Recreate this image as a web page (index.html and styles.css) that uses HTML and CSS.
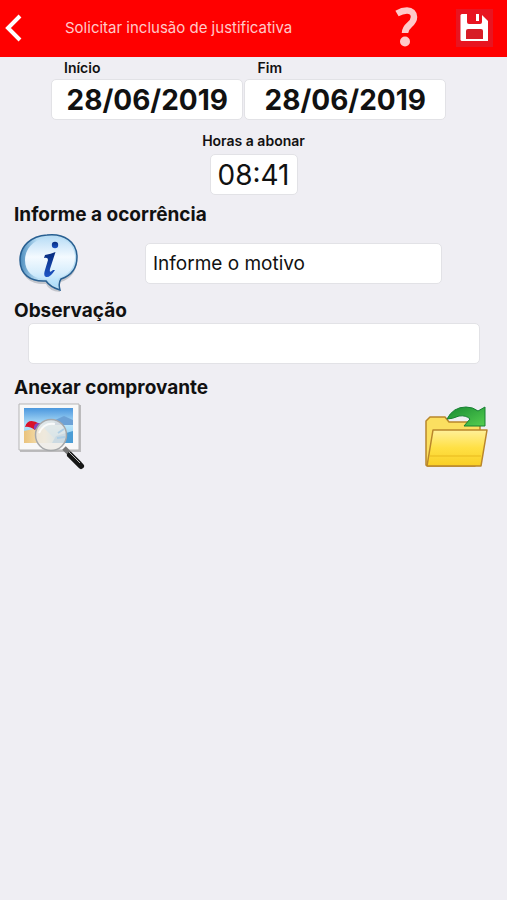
FILE: index.html
```html
<!DOCTYPE html>
<html lang="pt-BR">
<head>
<meta charset="utf-8">
<meta name="viewport" content="width=device-width, initial-scale=1">
<title>Solicitar inclusão de justificativa</title>
<link rel="stylesheet" href="styles.css">
</head>
<body>
<header class="topbar">
  <button class="icon-button back" type="button" aria-label="Voltar">
    <svg width="18" height="30" viewBox="0 0 18 30"><path d="M16 3 L4 15 L16 27" fill="none" stroke="#fff" stroke-width="4"/></svg>
  </button>
  <h1 class="title">Solicitar inclusão de justificativa</h1>
  <button class="icon-button help" type="button" aria-label="Ajuda">
    <svg width="26" height="42" viewBox="0 0 26 42"><path d="M3 6.500 C7 4.200 10 3.500 13 3.500 C17.500 3.500 20 6 20 10 C20 18 11 17.500 11 26" fill="none" stroke="#ffc9c9" stroke-width="6.500"/><circle cx="11" cy="34.500" r="5" fill="#ffc9c9"/></svg>
  </button>
  <button class="icon-button save" type="button" aria-label="Salvar">
    <svg width="37" height="38" viewBox="0 0 37 38"><path d="M0 0H37V38H0Z" fill="#e81420"/><path d="M6 5H25L32 12V32H6Q4.500 32 4.500 30.500V6.500Q4.500 5 6 5Z" fill="#fff"/><path d="M11 4H26V13Q26 15 24 15H13Q11 15 11 13Z" fill="#e81420"/><path d="M20 5H23V12H20Z" fill="#fff"/><path d="M10 30V22Q10 20 12 20H25Q27 20 27 22V30Z" fill="#d71c26"/></svg>
  </button>
</header>
<main>
  <form class="form">
    <div class="dates">
      <div class="field start">
        <label for="inicio">Início</label>
        <input class="box date" id="inicio" type="text" value="28/06/2019">
      </div>
      <div class="field end">
        <label for="fim">Fim</label>
        <input class="box date" id="fim" type="text" value="28/06/2019">
      </div>
    </div>
    <div class="hours">
      <label for="horas">Horas a abonar</label>
      <input class="box time" id="horas" type="text" value="08:41">
    </div>
    <label class="heading" for="motivo">Informe a ocorrência</label>
    <div class="reason">
      <svg width="62" height="60" viewBox="0 0 62 60" aria-hidden="true">
        <defs>
          <linearGradient id="bubble" x1="0" y1="0" x2="0" y2="1"><stop offset="0" stop-color="#b9ddf6"/><stop offset=".4" stop-color="#f4faff"/><stop offset=".7" stop-color="#d8eefc"/><stop offset="1" stop-color="#a9dcfa"/></linearGradient>
          <linearGradient id="rim" x1="0" y1="0" x2="1" y2="0"><stop offset="0" stop-color="#4d8dbe"/><stop offset=".3" stop-color="#b9ddf3"/></linearGradient>
          <linearGradient id="ink" x1="0" y1="0" x2="0" y2="1"><stop offset="0" stop-color="#062a7c"/><stop offset="1" stop-color="#1d55c6"/></linearGradient>
        </defs>
        <path d="M30 3 C46 1 59 10 59 25 C59 37 52 44 43 47 Q40 50 42 57 Q31 56 28 49 C13 50 3 42 3 28 C3 14 14 4 30 3Z" fill="#8f949e" opacity=".45" transform="translate(0 2)"/>
        <path d="M29 2 C46 0 59 9 59 24 C59 36 52 43 43 46 Q40 50 42 57 Q32 54 28 48 C12 49 2 41 2 27 C2 13 13 3 29 2Z" fill="url(#rim)" stroke="#285f91" stroke-width="1.500"/>
        <path d="M32 4 C47 3 57 12 57 24 C57 35 50 42 41 45 Q38 49 40 54 Q33 51 29 46 C15 46 7 39 7 27 C7 15 17 5 32 4Z" fill="url(#bubble)"/>
        <circle cx="37" cy="12" r="3.200" fill="url(#ink)"/>
        <path d="M27 22 Q33 21 37.500 19 L32 36 Q31 41 35 37 L37 37 Q32 45 28 44 Q25 43 27 37 L30 27 Q30 24 26 25Z" fill="url(#ink)"/>
      </svg>
      <select class="box motive" id="motivo"><option>Informe o motivo</option></select>
    </div>
    <label class="heading" for="obs">Observação</label>
    <input class="box note" id="obs" type="text">
    <h2 class="heading">Anexar comprovante</h2>
    <div class="attach">
      <button class="icon-button" type="button" aria-label="Ver comprovante">
        <svg width="70" height="70" viewBox="0 0 70 70">
          <defs>
            <linearGradient id="sky" x1="0" y1="0" x2="0" y2="1"><stop offset="0" stop-color="#4a97de"/><stop offset=".5" stop-color="#b8e4fa"/><stop offset="1" stop-color="#79c4ef"/></linearGradient>
            <linearGradient id="sand" x1="0" y1="0" x2="1" y2="0"><stop offset="0" stop-color="#eac37c"/><stop offset=".6" stop-color="#f8e7bd"/><stop offset="1" stop-color="#8fcdf1"/></linearGradient>
          </defs>
          <path d="M2 2H63V49H2Z" fill="#999" opacity=".6"/>
          <path d="M1 1H61V47H1Z" fill="#f8f8f8" stroke="#b5b5b5"/>
          <path d="M6 5H55V40H6Z" fill="url(#sky)"/>
          <path d="M37 17L46 13L55 17V22H36Z" fill="#6da2d6"/>
          <path d="M6 28L25 24L41 40H6Z" fill="url(#sand)"/>
          <path d="M38 33L55 28V40H34Z" fill="#4b9dd5"/>
          <path d="M7 24Q10 14 22 21L17 27Q11 23 7 24Z" fill="#d91229"/>
          <path d="M22 20Q15 19 16 27L21 24Z" fill="#8448bd"/>
          <path d="M46 45L62 61" stroke="#777" stroke-width="5"/>
          <path d="M52 52L63 63" stroke="#161616" stroke-width="6" stroke-linecap="round"/>
          <path d="M51 49L62 60" stroke="#bbb" stroke-width="1"/>
          <circle cx="33" cy="32" r="15.500" fill="#eceae5" fill-opacity=".8" stroke="#a6a8aa" stroke-width="1.500"/>
          <path d="M21 30Q26 19 37 21" fill="none" stroke="#fff" stroke-width="2" opacity=".8"/>
          <path d="M40 30L46 26M39 35L47 34" stroke="#b0cfe5" stroke-width="2"/>
        </svg>
      </button>
      <button class="icon-button" type="button" aria-label="Abrir arquivo">
        <svg width="64" height="64" viewBox="0 0 64 64">
          <defs>
            <linearGradient id="folder" x1="0" y1="0" x2="0" y2="1"><stop offset="0" stop-color="#fff09a"/><stop offset=".5" stop-color="#ffe044"/><stop offset="1" stop-color="#f9cf25"/></linearGradient>
            <linearGradient id="arrow" x1="0" y1="0" x2="1" y2="1"><stop offset="0" stop-color="#188a32"/><stop offset="1" stop-color="#55cf50"/></linearGradient>
          </defs>
          <path d="M1 59V15L5 11H20L24 16H55V26L50 60H3Z" fill="#fbdf60" stroke="#b9862b" stroke-width="1.500" stroke-linejoin="round"/>
          <path d="M8 24H62L56 60H2Z" fill="url(#folder)" stroke="#b9862b" stroke-width="1.500" stroke-linejoin="round"/>
          <path d="M5 50H56" stroke="#e8b91f"/>
          <path d="M22 13Q28 1 41 1Q48 1 53 5L60 1V20H39L45 13Q41 9 34 10Q27 13 22 13Z" fill="url(#arrow)" stroke="#168032" stroke-linejoin="round"/>
        </svg>
      </button>
    </div>
  </form>
</main>
</body>
</html>
```
FILE: styles.css
```css
* {
  box-sizing: border-box;
}

body {
  margin: 0;
  min-height: 100vh;
  background: #efeef3;
  color: #111;
  font-family: Inter, "Liberation Sans", sans-serif;
}

.topbar {
  display: flex;
  align-items: center;
  height: 57px;
  padding: 0 14px 2px 4px;
  background: #f00;
}

.icon-button {
  display: block;
  padding: 0;
  border: 0;
  background: none;
}

.icon-button svg,
.reason svg {
  display: block;
}

.title {
  flex: 1;
  margin: 0 0 0 43px;
  color: #ffc9c9;
  font-size: 15px;
  font-weight: 400;
}

.save {
  margin-left: 36px;
}

.form {
  display: flex;
  flex-direction: column;
}

.dates {
  display: flex;
  gap: 1px;
  padding: 3px 61px 0 51px;
}

.field {
  display: flex;
  flex-direction: column;
  min-width: 0;
}

.start {
  flex: 192;
}

.end {
  flex: 201;
}

.field label,
.hours label {
  font-size: 14px;
  font-weight: 600;
  line-height: 16px;
}

.field label {
  padding-left: 13px;
  margin-bottom: 3px;
}

.box {
  height: 41px;
  padding: 0 7px;
  border: 1px solid #e2e2e6;
  border-radius: 5px;
  background: #fff;
  color: #111;
  font-family: inherit;
  font-size: 19px;
}

.date {
  width: 100%;
  font-size: 28px;
  font-weight: 700;
  text-align: center;
}

.hours {
  display: flex;
  flex-direction: column;
  align-items: center;
  gap: 5px;
  margin-top: 13px;
}

.time {
  width: 88px;
  font-size: 28px;
  text-align: center;
}

.heading {
  margin: 0 0 0 14px;
  font-size: 19px;
  font-weight: 700;
  line-height: 24px;
}

.hours + .heading {
  margin-top: 8px;
}

.reason {
  display: flex;
  align-items: center;
  gap: 65px;
  padding: 6px 65px 6px 18px;
}

.motive {
  flex: 1;
  min-width: 0;
  appearance: none;
}

.note {
  margin: 0 27px 12px 28px;
}

.attach {
  display: flex;
  justify-content: space-between;
  padding: 3px 18px 0 18px;
}
```
